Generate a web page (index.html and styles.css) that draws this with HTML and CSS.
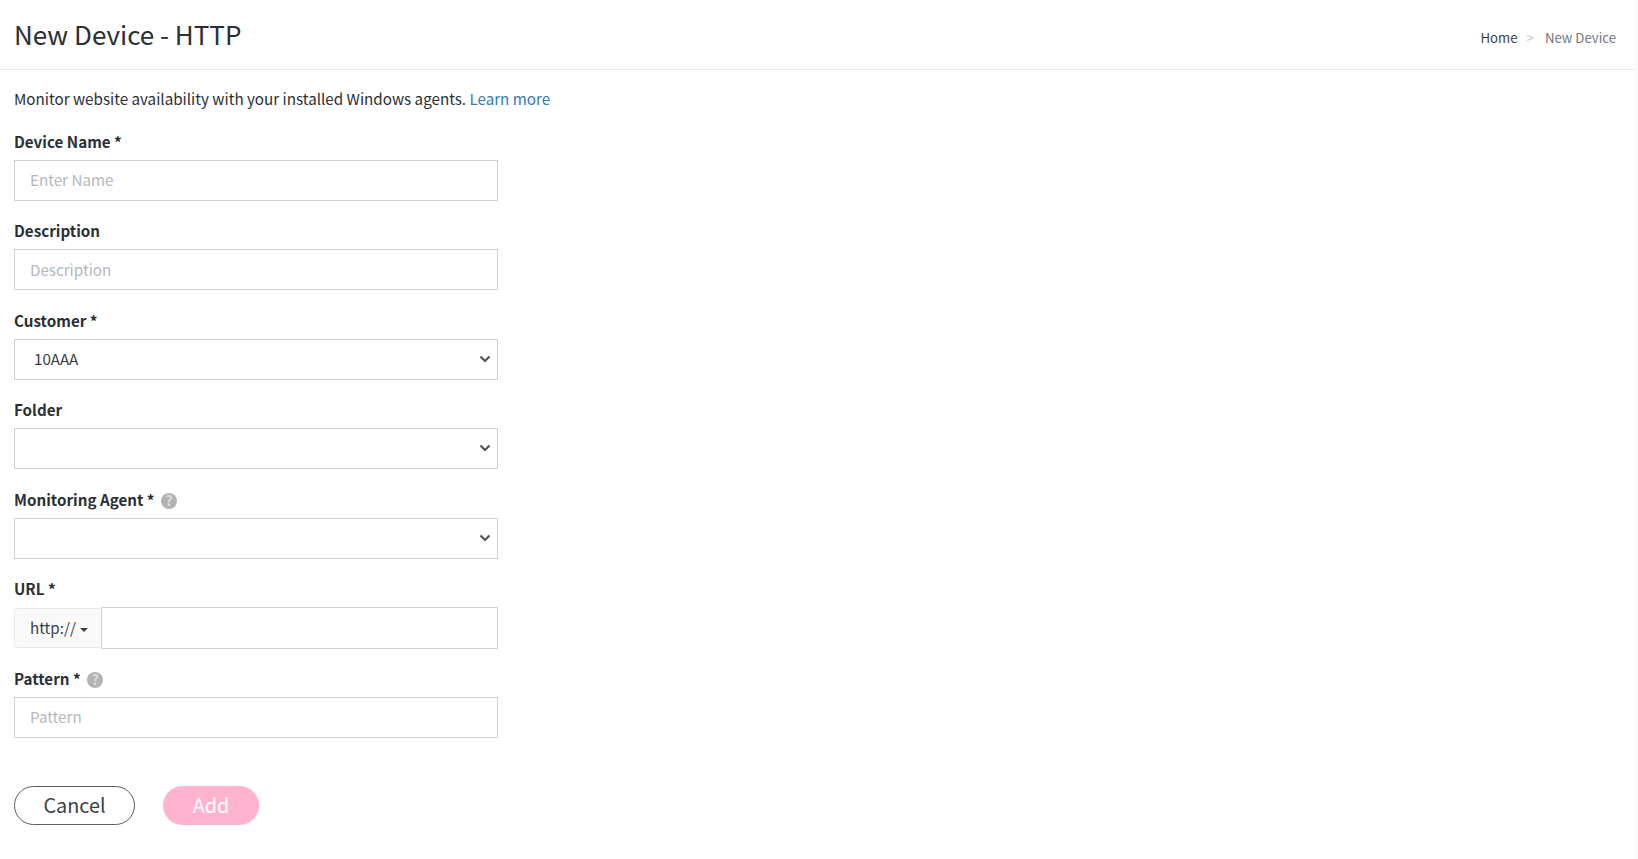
FILE: index.html
```html
<!DOCTYPE html>
<html lang="en">
<head>
<meta charset="utf-8">
<title>New Device - HTTP</title>
<link rel="stylesheet" href="styles.css">
</head>
<body>
<div class="page">
<header class="topbar">
  <h1 class="title">New Device - HTTP</h1>
  <nav class="crumbs"><a class="crumb-home">Home</a><span class="crumb-sep">&gt;</span><span class="crumb-current">New Device</span></nav>
</header>
<main class="content">
  <p class="intro">Monitor website availability with your installed Windows agents. <a class="link">Learn more</a></p>
  <form class="form">
    <div class="group">
      <label class="label">Device Name *</label>
      <input class="control" type="text" placeholder="Enter Name">
    </div>
    <div class="group">
      <label class="label">Description</label>
      <input class="control" type="text" placeholder="Description">
    </div>
    <div class="group">
      <label class="label">Customer *</label>
      <div class="select-wrap">
        <select class="control select"><option>10AAA</option></select>
        <svg class="chevron" viewBox="0 0 12 8" width="12" height="8"><path d="M1.5 1.5 6 6l4.5-4.5" fill="none" stroke="#555" stroke-width="2.2"/></svg>
      </div>
    </div>
    <div class="group">
      <label class="label">Folder</label>
      <div class="select-wrap">
        <select class="control select"><option></option></select>
        <svg class="chevron" viewBox="0 0 12 8" width="12" height="8"><path d="M1.5 1.5 6 6l4.5-4.5" fill="none" stroke="#555" stroke-width="2.2"/></svg>
      </div>
    </div>
    <div class="group">
      <label class="label">Monitoring Agent * <span class="help">?</span></label>
      <div class="select-wrap">
        <select class="control select"><option></option></select>
        <svg class="chevron" viewBox="0 0 12 8" width="12" height="8"><path d="M1.5 1.5 6 6l4.5-4.5" fill="none" stroke="#555" stroke-width="2.2"/></svg>
      </div>
    </div>
    <div class="group">
      <label class="label">URL *</label>
      <div class="url-row">
        <div class="addon">http:// <span class="caret"></span></div>
        <input class="control url-input" type="text">
      </div>
    </div>
    <div class="group">
      <label class="label">Pattern * <span class="help">?</span></label>
      <input class="control" type="text" placeholder="Pattern">
    </div>
    <div class="actions">
      <button class="btn btn-cancel" type="button">Cancel</button>
      <button class="btn btn-add" type="button">Add</button>
    </div>
  </form>
</main>
</div>
</body>
</html>
```

FILE: styles.css
```css
* { box-sizing: border-box; }
html, body { margin: 0; height: 100%; background: #fafafa; overflow: hidden; }
body { font-family: "Noto Sans CJK SC", "Noto Sans", sans-serif; color: #2b2f33; font-size: 15.2px; }
.page { width: 1634px; height: 100%; background: #fff; }
.topbar { height: 70px; border-bottom: 1px solid #e6e8ea; display: flex; justify-content: space-between; align-items: center; padding: 0 18px 0 14px; }
.title { margin: 0; font-size: 26px; font-weight: 400; line-height: 69px; margin-top: -3px; color: #2b2f33; }
.crumbs { font-size: 13.2px; display: flex; margin-top: 6px; color: #70767c; line-height: 20px; }
.crumb-home { color: #3a3f45; }
.crumb-sep { color: #c4c7ca; margin: 0 11px 0 9px; }
.content { padding: 0 14px; }
.intro { margin: 0; padding-top: 16px; font-size: 15.2px; line-height: 24px; }
.link { color: #337ab7; }
.form { width: 484px; margin-top: 18.9px; }
.group { height: 89.5px; }
.label { display: block; font-size: 15.2px; font-weight: 700; line-height: 24px; height: 31px; color: #2b2f33; }
.control { display: block; width: 100%; height: 41px; border: 1px solid #ccd0d9; border-radius: 0; background: #fff; padding: 0 15px 2px; font: inherit; color: #3a3f45; outline: none; }
.control::placeholder { color: #b5b8bb; opacity: 1; }
.select-wrap { position: relative; }
.select { appearance: none; padding-left: 19px; }
.chevron { position: absolute; right: 7px; top: 16px; pointer-events: none; }
.help { display: inline-block; width: 16px; height: 16px; margin-left: 3px; border-radius: 50%; background: #b3b3b3; color: #dcdcdc; font-size: 14px; font-weight: 700; line-height: 15px; text-align: center; vertical-align: 0; }
.url-row { display: flex; align-items: center; }
.addon { width: 87px; height: 40px; flex: none; border: 1px solid #e6e8ea; border-right: 0; border-radius: 4px 0 0 4px; background: #f9f9f9; padding-left: 15px; line-height: 36px; color: #3a3f45; white-space: nowrap; }
.caret { display: inline-block; width: 0; height: 0; border: 4px solid transparent; border-top-color: #3a3f45; border-bottom: 0; vertical-align: 2px; margin-left: 1px; }
.url-input { flex: 1; width: auto; height: 42px; }
.actions { display: flex; gap: 28px; margin-top: 30.6px; }
.btn { height: 39px; border-radius: 20px; font: inherit; font-size: 19.8px; line-height: 36px; padding: 0; cursor: pointer; }
.btn-cancel { width: 121px; background: #fff; border: 1px solid #5a5f64; color: #3a3f45; }
.btn-add { width: 96px; background: #ffb3cf; border: 0; color: #fff; }
```
